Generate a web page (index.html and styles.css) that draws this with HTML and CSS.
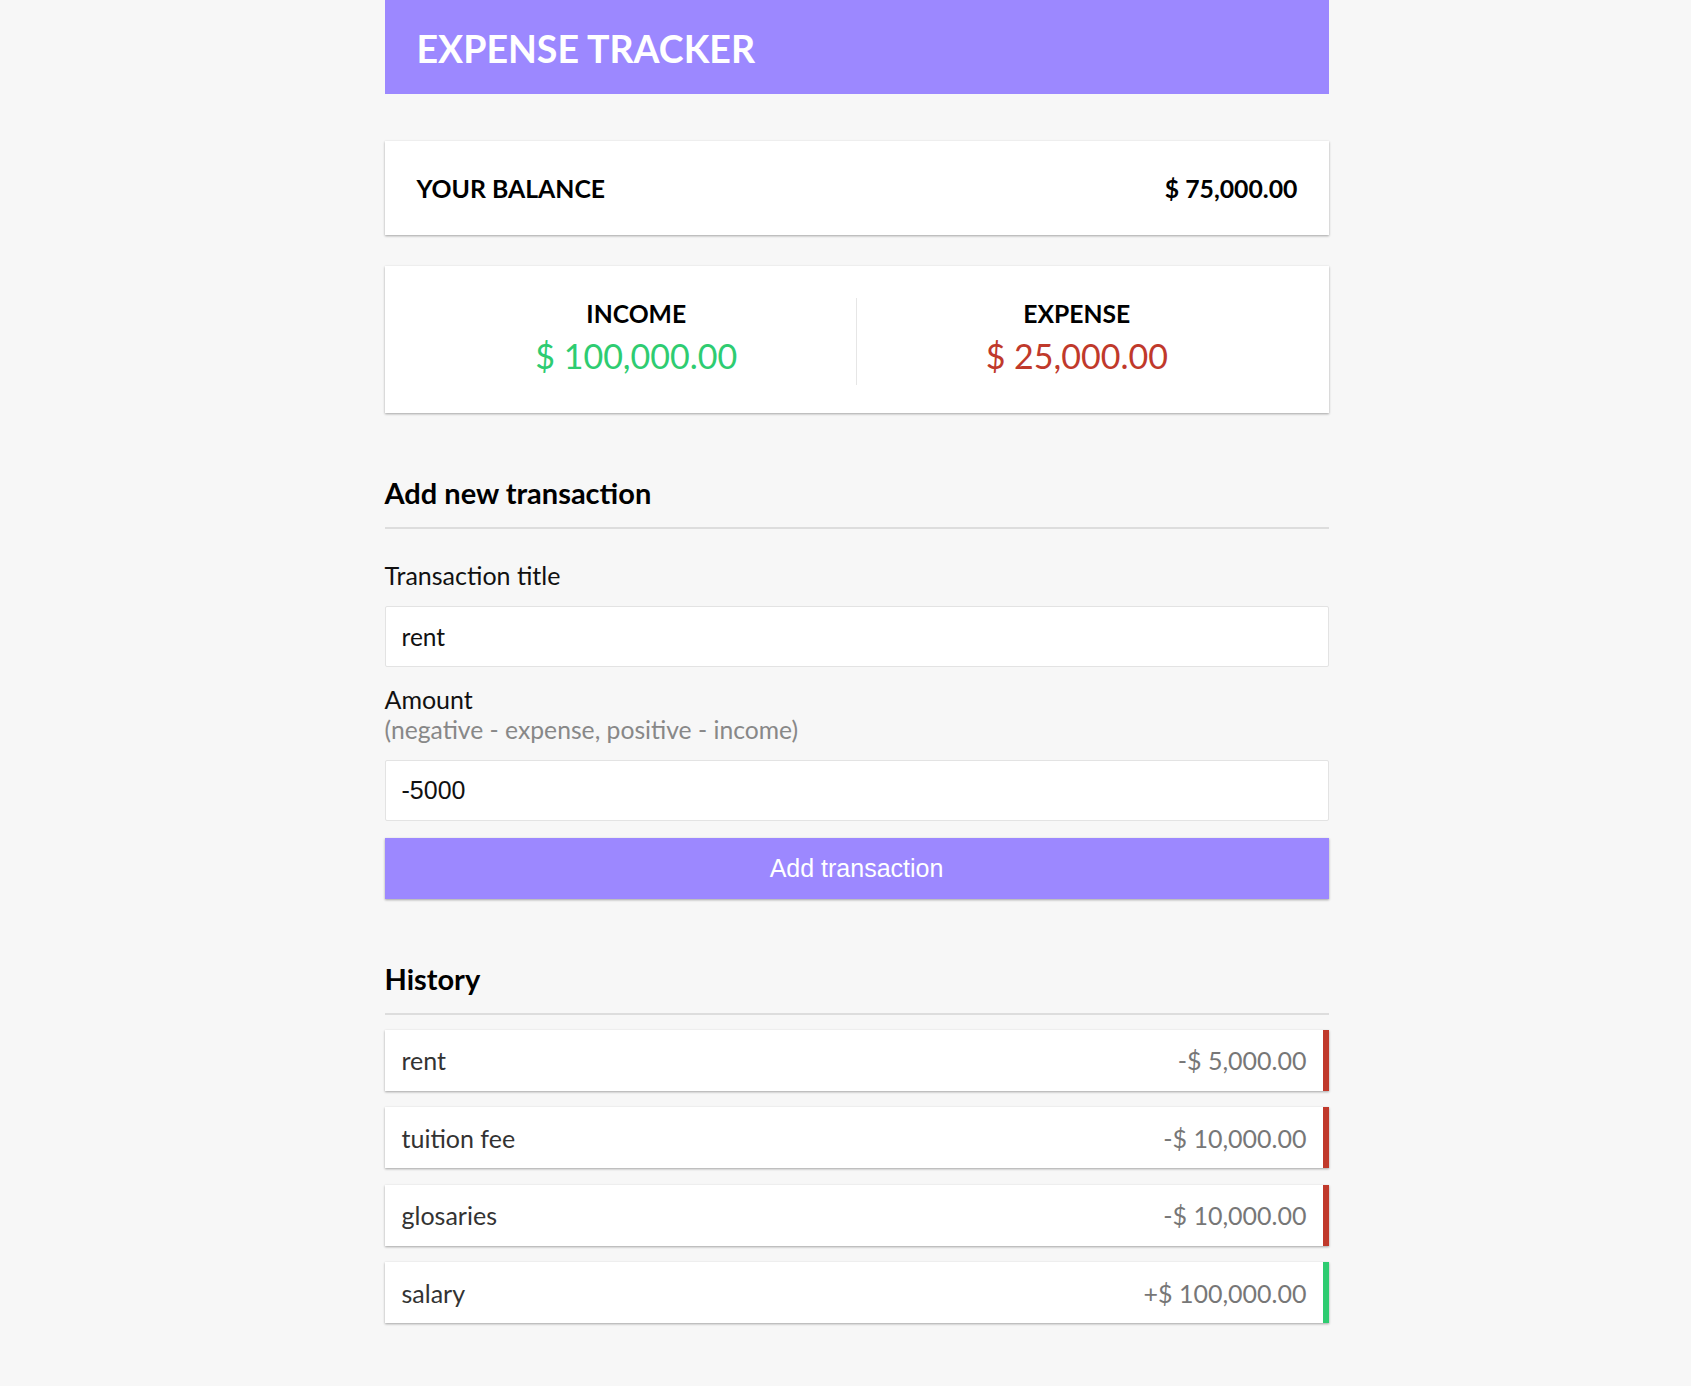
FILE: index.html
```html
<!DOCTYPE html>
<html lang="en">
<head>
<meta charset="utf-8">
<title>Expense Tracker</title>
<link rel="stylesheet" href="styles.css">
</head>
<body>
<div class="container">
  <header class="header">
    <h1 class="title">EXPENSE TRACKER</h1>
  </header>

  <div class="card balance">
    <span class="balance-label">YOUR BALANCE</span>
    <span class="balance-value">$ 75,000.00</span>
  </div>

  <div class="card summary">
    <div class="summary-col">
      <div class="summary-label">INCOME</div>
      <div class="summary-value income">$ 100,000.00</div>
    </div>
    <div class="summary-divider"></div>
    <div class="summary-col">
      <div class="summary-label">EXPENSE</div>
      <div class="summary-value expense">$ 25,000.00</div>
    </div>
  </div>

  <h3 class="section-title">Add new transaction</h3>
  <div class="rule"></div>

  <form class="form">
    <label class="label">Transaction title</label>
    <input class="input" type="text" value="rent">
    <label class="label label-amount">Amount<br><span class="hint">(negative - expense, positive - income)</span></label>
    <input class="input input-number" type="text" value="-5000">
    <button class="btn" type="button">Add transaction</button>
  </form>

  <h3 class="section-title">History</h3>
  <div class="rule"></div>

  <ul class="list">
    <li class="item minus"><span class="item-name">rent</span><span class="item-amount">-$ 5,000.00</span></li>
    <li class="item minus"><span class="item-name">tuition fee</span><span class="item-amount">-$ 10,000.00</span></li>
    <li class="item minus"><span class="item-name">glosaries</span><span class="item-amount">-$ 10,000.00</span></li>
    <li class="item plus"><span class="item-name">salary</span><span class="item-amount">+$ 100,000.00</span></li>
  </ul>
</div>
</body>
</html>
```
FILE: styles.css
```css
* { box-sizing: border-box; }

html, body {
  margin: 0;
  background: #f7f7f7;
}

body {
  font-family: Lato, "Liberation Sans", sans-serif;
  color: #111;
  padding-left: 22px;
}

.container {
  width: 944px;
  margin: 0 auto;
  padding-bottom: 60px;
}

.header {
  background: #9c88ff;
  height: 94px;
  display: flex;
  align-items: center;
  padding: 2px 32px 0;
}

.title {
  margin: 0;
  color: #fff;
  font-size: 37.5px;
  font-weight: 700;
  line-height: 1.2;
}

.card {
  background: #fff;
  box-shadow: 0 1px 3px rgba(0,0,0,0.12), 0 1px 2px rgba(0,0,0,0.24);
}

.balance {
  margin-top: 47px;
  height: 94px;
  padding: 0 31px 0 32px;
  display: flex;
  align-items: center;
  justify-content: space-between;
  font-size: 24.8px;
  font-weight: 700;
  color: #000;
}

.summary {
  margin-top: 31px;
  height: 147px;
  padding: 33px 32px 31px;
  display: flex;
}

.summary-col {
  flex: 1;
  display: flex;
  flex-direction: column;
  align-items: center;
}

.summary-divider {
  width: 1px;
  margin: -1px 0 -3px;
  background: #e6e6e6;
}

.summary-label {
  font-size: 24.7px;
  font-weight: 700;
  line-height: 1.2;
  color: #000;
}

.summary-value {
  font-size: 34px;
  line-height: 1.2;
  margin-top: 7px;
}

.income { color: #2ecc71; }
.expense { color: #c0392b; }

.section-title {
  margin: 63px 0 0;
  font-size: 29px;
  font-weight: 700;
  line-height: 1.2;
  color: #000;
}

.rule {
  height: 2px;
  background: #dddddd;
  margin-top: 16px;
}

.form {
  display: flex;
  flex-direction: column;
  padding-top: 31px;
}

.label {
  font-size: 25px;
  line-height: 30px;
  color: #111;
  margin-bottom: 16px;
}

.label-amount {
  margin-top: 17px;
  margin-bottom: 15px;
}

.hint {
  color: #888;
  font-size: 24.7px;
}

.input {
  height: 61px;
  border: 1px solid #e3e3e3;
  border-radius: 2px;
  background: #fff;
  padding: 0 16px;
  font-family: Lato, sans-serif;
  font-size: 24.5px;
  color: #111;
  outline: none;
}

.input-number {
  font-family: "Liberation Sans", Arial, sans-serif;
  font-size: 25px;
}

.btn {
  margin-top: 17px;
  height: 61px;
  border: 0;
  background: #9c88ff;
  color: #fff;
  font-family: "Liberation Sans", Arial, sans-serif;
  font-size: 25px;
  box-shadow: 0 1px 3px rgba(0,0,0,0.12), 0 1px 2px rgba(0,0,0,0.24);
}

.list {
  list-style: none;
  margin: 15px 0 0;
  padding: 0;
}

.item {
  background: #fff;
  height: 61px;
  margin-bottom: 16.6px;
  padding: 0 16px 0 17px;
  display: flex;
  align-items: center;
  justify-content: space-between;
  font-size: 25px;
  border-right: 6px solid #c0392b;
  box-shadow: 0 1px 3px rgba(0,0,0,0.12), 0 1px 2px rgba(0,0,0,0.24);
}

.item.plus { border-right-color: #2ecc71; }

.item-name { color: #333; }
.item-amount { color: #777; }
```
